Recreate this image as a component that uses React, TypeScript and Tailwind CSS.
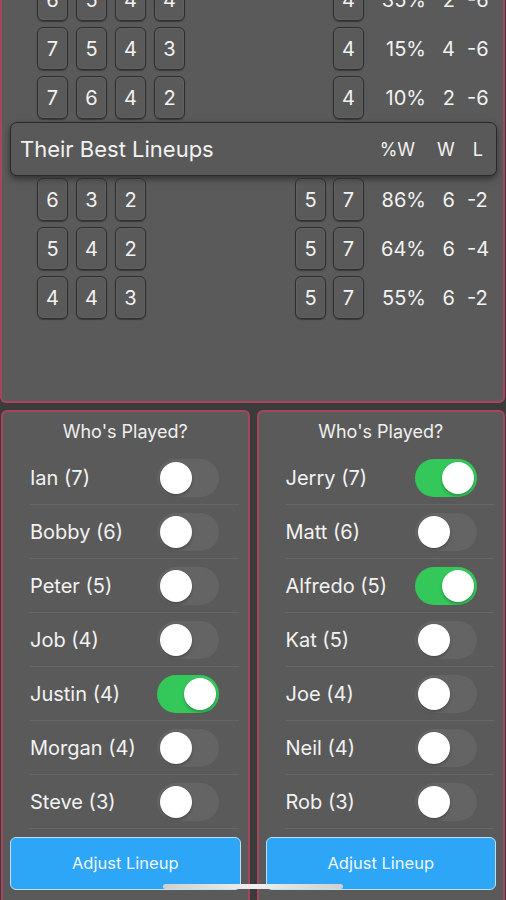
import React from "react";

const FONT = { fontFamily: "Inter, 'Noto Sans', 'Liberation Sans', sans-serif" };

function Box({ n }: { n: number }) {
  return (
    <div className="w-[31px] h-[43px] rounded-[6px] border-[1.5px] border-[#2e2e2e] shadow-[0_1px_1px_rgba(0,0,0,0.35),inset_0_0_0_1px_rgba(255,255,255,0.04)] flex items-center justify-center text-[20px] text-[#f2f2f2]">
      {n}
    </div>
  );
}

function Row({ left, right, pct, w, l }: { left: number[]; right: number[]; pct: string; w: string; l: string }) {
  return (
    <div className="flex items-center h-[43px] pr-[16px] text-[20px] text-[#f2f2f2]">
      <div className="flex gap-[8px] pl-[35px]">
        {left.map((n, i) => (
          <Box key={i} n={n} />
        ))}
      </div>
      <div className="flex-1" />
      <div className="flex gap-[7px] mr-[2px]">
        {right.map((n, i) => (
          <Box key={i} n={n} />
        ))}
      </div>
      <div className="w-[60px] text-right">{pct}</div>
      <div className="w-[41px] text-right pr-[12px]">{w}</div>
      <div className="w-[20px] text-right">{l}</div>
    </div>
  );
}

function Toggle({ on }: { on: boolean }) {
  return (
    <div className={`relative w-[62px] h-[38px] rounded-full ${on ? "bg-[#34c759]" : "bg-[#646464]"}`}>
      <div
        className={`absolute top-[3px] w-[32px] h-[32px] rounded-full bg-white shadow-[0_2px_3px_rgba(0,0,0,0.25)] ${
          on ? "right-[3px]" : "left-[3px]"
        }`}
      />
    </div>
  );
}

function Panel({ players, pr }: { players: [string, boolean][]; pr: string }) {
  return (
    <div className="flex-1 h-[500px] rounded-t-[6px] border-2 border-b-0 border-[#a9445f] bg-[#5a5a5a] flex flex-col">
      <div className="h-[39px] flex items-center justify-center text-[18px] text-[#f0f0f0]">Who's Played?</div>
      <div className="ml-[27px] mr-[9px]">
        {players.map(([name, on], i) => (
          <div key={i} className={`h-[54px] flex items-center justify-between border-b border-[#676767] ${pr}`}>
            <span className="text-[20px] text-[#f2f2f2]">{name}</span>
            <Toggle on={on} />
          </div>
        ))}
      </div>
      <button className="mt-[8px] mx-[7px] h-[53px] rounded-[6px] border-[1.5px] border-[#bfe0f5] bg-[#2ea6f7] text-[16.5px] text-[#eef7ff]">
        Adjust Lineup
      </button>
    </div>
  );
}

export default function App() {
  const left: [string, boolean][] = [
    ["Ian (7)", false],
    ["Bobby (6)", false],
    ["Peter (5)", false],
    ["Job (4)", false],
    ["Justin (4)", true],
    ["Morgan (4)", false],
    ["Steve (3)", false],
  ];
  const right: [string, boolean][] = [
    ["Jerry (7)", true],
    ["Matt (6)", false],
    ["Alfredo (5)", true],
    ["Kat (5)", false],
    ["Joe (4)", false],
    ["Neil (4)", false],
    ["Rob (3)", false],
  ];
  return (
    <div style={FONT} className="relative w-[506px] h-[900px] overflow-hidden bg-[#3b3b3b]">
      <div className="h-[403px] mr-[1px] rounded-b-[6px] border-2 border-t-0 border-[#a9445f] bg-[#5a5a5a] overflow-hidden">
        <div className="-mt-[22px] flex flex-col gap-[6px]">
          <Row left={[6, 5, 4, 4]} right={[4]} pct="35%" w="2" l="-6" />
          <Row left={[7, 5, 4, 3]} right={[4]} pct="15%" w="4" l="-6" />
          <Row left={[7, 6, 4, 2]} right={[4]} pct="10%" w="2" l="-6" />
        </div>
        <div className="mt-[3px] ml-[8px] mr-[6px] h-[54px] rounded-[7px] border-[1.5px] border-[#2a2a2a] bg-[#595959] shadow-[0_3px_6px_rgba(0,0,0,0.45)] flex items-center pl-[9px] pr-[13px] text-[#f2f2f2]">
          <span className="text-[22px] flex-1">Their Best Lineups</span>
          <span className="text-[18px] mr-[22px]">%W</span>
          <span className="text-[18px] mr-[18px]">W</span>
          <span className="text-[18px]">L</span>
        </div>
        <div className="mt-[2px] flex flex-col gap-[6px]">
          <Row left={[6, 3, 2]} right={[5, 7]} pct="86%" w="6" l="-2" />
          <Row left={[5, 4, 2]} right={[5, 7]} pct="64%" w="6" l="-4" />
          <Row left={[4, 4, 3]} right={[5, 7]} pct="55%" w="6" l="-2" />
        </div>
      </div>
      <div className="mt-[7px] flex gap-[7px] pl-[1px] pr-[1px]">
        <Panel players={left} pr="pr-[20px]" />
        <Panel players={right} pr="pr-[17px]" />
      </div>
      <div className="absolute left-[163px] top-[884px] w-[180px] h-[5px] rounded-full bg-gradient-to-r from-[#cfcfcf] via-[#efefef] to-[#cfcfcf]" />
    </div>
  );
}
